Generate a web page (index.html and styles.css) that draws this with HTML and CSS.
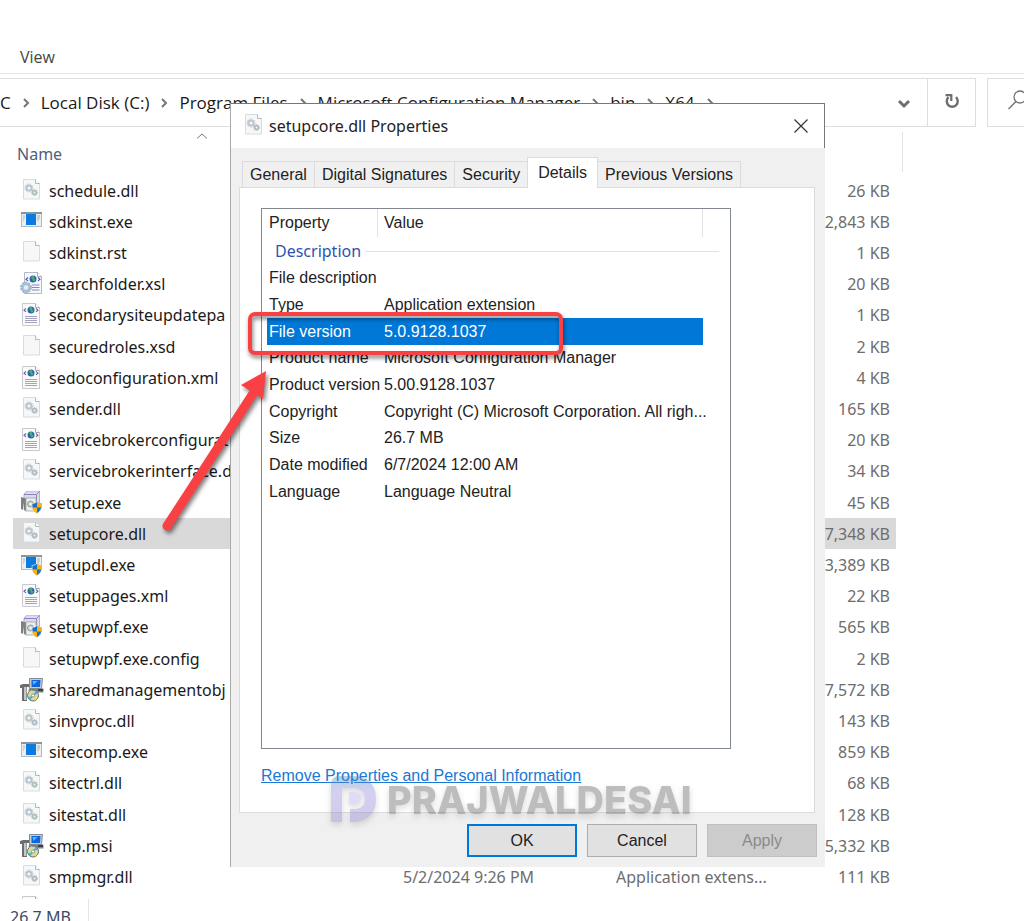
FILE: index.html
```html
<!DOCTYPE html>
<html lang="en">

<head>
    <meta charset="UTF-8">
    <meta name="viewport" content="width=device-width, initial-scale=1.0">
    <title>X64</title>
    <link rel="stylesheet" href="styles.css">
</head>

<body>
    <!-- file type icons -->
    <svg class="icon-defs" width="0" height="0" aria-hidden="true">
        <defs>
            <linearGradient id="pd-fill" x1="0" y1="0" x2="0" y2="1">
                <stop offset="0" stop-color="#3f86bc" />
                <stop offset="0.35" stop-color="#8d86e0" />
                <stop offset="1" stop-color="#8a74c8" />
            </linearGradient>
            <symbol id="page" viewBox="0 0 24 24">
                <path d="M3.500 .5h12l4 4v15.500h-16z" fill="#f6f7f7" stroke="#d9dcde" />
                <path d="M15.500 .5v4h4" fill="#fff" stroke="#b4b8ba" />
            </symbol>
            <symbol id="dll" viewBox="0 0 24 24">
                <use href="#page" />
                <circle cx="9" cy="9" r="2.600" fill="none" stroke="#bcc5cc" stroke-width="2" />
                <circle cx="9" cy="9" r="4" fill="none" stroke="#bcc5cc" stroke-width="1" stroke-dasharray="1.5 1.200" />
                <circle cx="14.500" cy="13.500" r="1.800" fill="none" stroke="#b2bcc4" stroke-width="1.800" />
                <circle cx="14.500" cy="13.500" r="3" fill="none" stroke="#b2bcc4" stroke-width="1" stroke-dasharray="1.200 1" />
            </symbol>
            <symbol id="exe" viewBox="0 0 24 24">
                <rect x="1.500" y="2.500" width="20" height="14" fill="#eceff1" stroke="#b5babd" />
                <path d="M1 3h21" stroke="#8d9499" stroke-width="2" />
                <rect x="6" y="4" width="10" height="11" fill="#0c7be0" />
                <path d="M3 6h2M3 8h2M3 10h1M17 6h3M17 8h3M17 10h2" stroke="#a9afb3" />
            </symbol>
            <symbol id="xml" viewBox="0 0 24 24">
                <path d="M2.500 .5h13l4 4v18h-17z" fill="#fafafa" stroke="#c9c9cf" />
                <path d="M15.500 .5v4h4" fill="#fff" stroke="#a9a9b2" />
                <circle cx="11" cy="7" r="3.500" fill="#2668b0" />
                <path d="M9 5.500q2-2.500 3.500-.5l-.5 1.500 1.500 1-1 2q-2 0-2-2z" fill="#4fae62" />
                <path d="M6 5.500l-2 1.700 2 1.700M16 5.500l2 1.700-2 1.700" fill="none" stroke="#685fae" stroke-width="1.100" />
                <path d="M5 13.500h12M5 15.500h12M5 17.500h12M5 19.500h12" stroke="#a3a3bd" />
            </symbol>
            <symbol id="xsl" viewBox="0 0 24 24">
                <path d="M4.500 .5h13l4 4v17h-17z" fill="#f7f8fc" stroke="#b4b8cc" />
                <path d="M17.500 .5v4h4" fill="#fff" stroke="#a9a9b2" />
                <circle cx="13" cy="7" r="3.500" fill="#2668b0" />
                <path d="M11 5.500q2-2.500 3.500-.5l-.5 1.500 1.500 1-1 2q-2 0-2-2z" fill="#4fae62" />
                <path d="M8 5.500l-2 1.700 2 1.700M18 5.500l2 1.700-2 1.700" fill="none" stroke="#4450a8" stroke-width="1.100" />
                <path d="M12 13h7.500M12 15.500h7.500M12 18h7.500" stroke="#7d8ad0" stroke-width="1.200" />
                <circle cx="6" cy="15.500" r="3.800" fill="#e6eef6" stroke="#a9bfd5" stroke-width="3" />
                <circle cx="6" cy="15.500" r="5.500" fill="none" stroke="#87a4c2" stroke-dasharray="2 1.500" />
            </symbol>
            <symbol id="shield" viewBox="0 0 24 24">
                <path d="M12 12.500q3 0 5-2 2.500 2 5 2 .5 7-5 10-5.500-3-5-10z" fill="#1d6fc4" stroke="#fff" stroke-width=".6" />
                <path d="M17 10.500q2.500 2 5 2v4h-5zM12.200 16.500h4.800v6q-4-2-4.800-6z" fill="#fbb215" />
            </symbol>
            <symbol id="setup" viewBox="0 0 24 24">
                <path d="M4 3l3-3h12.500v13H4z" fill="#dcdaf0" stroke="#a6a2cc" stroke-width=".8" />
                <path d="M4 3.500h12.500l3-3M16.500 3.500v9" fill="none" stroke="#8a85bb" />
                <path d="M1 6l5 1.500v12.500l-2-1v-8l-1 8-2-1z" fill="#7c8080" />
                <rect x="6" y="7" width="10" height="13" fill="#edf0ee" stroke="#9da5a2" stroke-width=".8" />
                <circle cx="10.500" cy="13" r="3" fill="#c9d3cc" stroke="#8e9a94" />
                <circle cx="10.500" cy="13" r="1" fill="#fff" />
                <use href="#shield" />
            </symbol>
            <symbol id="exe-admin" viewBox="0 0 24 24">
                <use href="#exe" />
                <use href="#shield" />
            </symbol>
            <symbol id="msi" viewBox="0 0 24 24">
                <path d="M0 7l3-1h6v3H7v14H2V10H0z" fill="#6b6f70" />
                <path d="M4 9h2.500v13H4z" fill="#c3c7c7" />
                <path d="M9.500 .5h13l-1 10h-12z" fill="#c5ccd2" stroke="#6b7580" stroke-width=".8" />
                <path d="M11.500 2h9l-.5 7h-8.500z" fill="#0f63dd" />
                <path d="M12.500 3h5l-4 4z" fill="#4fc0f5" />
                <path d="M9 10.500h14.500v4h-6l-9-1z" fill="#7d8488" />
                <path d="M18 12h5" stroke="#24282b" stroke-width="1.500" />
                <circle cx="13" cy="17.500" r="5.500" fill="#c8dcd0" stroke="#66706c" />
                <path d="M13 17.500l-4-3.500 3-2zM13 17.500l4.500 3-3 2z" fill="#f2dc4b" />
                <path d="M13 17.500l2.500-5 2.500 3zM13 17.500l-2.500 5-2.500-3z" fill="#55b9a5" />
                <circle cx="13" cy="17.500" r="1.500" fill="#fff" stroke="#777" stroke-width=".7" />
            </symbol>
            <symbol id="crumb" viewBox="0 0 8 12">
                <path d="M2 2l4 4-4 4" fill="none" stroke="#767676" stroke-width="2" />
            </symbol>
        </defs>
    </svg>

    <div class="explorer">
        <div class="ribbon">
            <button class="ribbon-tab" type="button">View</button>
        </div>

        <div class="toolbar">
            <nav class="address">
                <a href="#">C</a>
                <svg class="sep"><use href="#crumb" /></svg>
                <a href="#">Local Disk (C:)</a>
                <svg class="sep"><use href="#crumb" /></svg>
                <a href="#">Program Files</a>
                <svg class="sep"><use href="#crumb" /></svg>
                <a href="#">Microsoft Configuration Manager</a>
                <svg class="sep"><use href="#crumb" /></svg>
                <a href="#">bin</a>
                <svg class="sep"><use href="#crumb" /></svg>
                <a href="#">X64</a>
                <svg class="sep"><use href="#crumb" /></svg>
                <button class="history" type="button" aria-label="Previous locations">
                    <svg width="14" height="10" viewBox="0 0 14 10"><path d="M2 2l5 5 5-5" fill="none" stroke="#6e6e6e" stroke-width="3" /></svg>
                </button>
            </nav>
            <button class="refresh" type="button" aria-label="Refresh">
                <svg width="16" height="16" viewBox="0 0 16 16"><path d="M12 4.200a5.500 5.500 0 1 1-7.500 0" fill="none" stroke="#6e6e6e" stroke-width="2.400" /><path d="M1.500 2.200h5.800v5.800" fill="none" stroke="#6e6e6e" stroke-width="2.200" /></svg>
            </button>
            <button class="search" type="button" aria-label="Search">
                <svg width="22" height="22" viewBox="0 0 22 22"><circle cx="13" cy="8" r="6" fill="none" stroke="#757575" stroke-width="1.300" /><path d="M9 12.500L1.500 20" stroke="#757575" stroke-width="1.500" /></svg>
            </button>
        </div>

        <div class="columns">
            <span class="column-name">Name</span>
            <svg class="sort" width="12" height="6" viewBox="0 0 12 6"><path d="M1 5.500l5-4.500 5 4.500" fill="none" stroke="#777" /></svg>
            <span class="column-end"></span>
        </div>

        <div class="files">
            <table class="file-table">
                <tbody>
                    <tr><td class="name"><svg><use href="#dll" /></svg>schedule.dll</td><td class="date"></td><td class="type"></td><td class="size">26 KB</td></tr>
                    <tr><td class="name"><svg><use href="#exe" /></svg>sdkinst.exe</td><td></td><td></td><td class="size">2,843 KB</td></tr>
                    <tr><td class="name"><svg><use href="#page" /></svg>sdkinst.rst</td><td></td><td></td><td class="size">1 KB</td></tr>
                    <tr><td class="name"><svg><use href="#xsl" /></svg>searchfolder.xsl</td><td></td><td></td><td class="size">20 KB</td></tr>
                    <tr><td class="name"><svg><use href="#xml" /></svg>secondarysiteupdatepa</td><td></td><td></td><td class="size">1 KB</td></tr>
                    <tr><td class="name"><svg><use href="#page" /></svg>securedroles.xsd</td><td></td><td></td><td class="size">2 KB</td></tr>
                    <tr><td class="name"><svg><use href="#xml" /></svg>sedoconfiguration.xml</td><td></td><td></td><td class="size">4 KB</td></tr>
                    <tr><td class="name"><svg><use href="#dll" /></svg>sender.dll</td><td></td><td></td><td class="size">165 KB</td></tr>
                    <tr><td class="name"><svg><use href="#xml" /></svg>servicebrokerconfigurat</td><td></td><td></td><td class="size">20 KB</td></tr>
                    <tr><td class="name"><svg><use href="#dll" /></svg>servicebrokerinterface.d</td><td></td><td></td><td class="size">34 KB</td></tr>
                    <tr><td class="name"><svg><use href="#setup" /></svg>setup.exe</td><td></td><td></td><td class="size">45 KB</td></tr>
                    <tr class="selected"><td class="name"><svg><use href="#dll" /></svg>setupcore.dll</td><td></td><td></td><td class="size">7,348 KB</td></tr>
                    <tr><td class="name"><svg><use href="#exe-admin" /></svg>setupdl.exe</td><td></td><td></td><td class="size">3,389 KB</td></tr>
                    <tr><td class="name"><svg><use href="#xml" /></svg>setuppages.xml</td><td></td><td></td><td class="size">22 KB</td></tr>
                    <tr><td class="name"><svg><use href="#setup" /></svg>setupwpf.exe</td><td></td><td></td><td class="size">565 KB</td></tr>
                    <tr><td class="name"><svg><use href="#page" /></svg>setupwpf.exe.config</td><td></td><td></td><td class="size">2 KB</td></tr>
                    <tr><td class="name"><svg><use href="#msi" /></svg>sharedmanagementobj</td><td></td><td></td><td class="size">7,572 KB</td></tr>
                    <tr><td class="name"><svg><use href="#dll" /></svg>sinvproc.dll</td><td></td><td></td><td class="size">143 KB</td></tr>
                    <tr><td class="name"><svg><use href="#exe" /></svg>sitecomp.exe</td><td></td><td></td><td class="size">859 KB</td></tr>
                    <tr><td class="name"><svg><use href="#dll" /></svg>sitectrl.dll</td><td></td><td></td><td class="size">68 KB</td></tr>
                    <tr><td class="name"><svg><use href="#dll" /></svg>sitestat.dll</td><td></td><td></td><td class="size">128 KB</td></tr>
                    <tr><td class="name"><svg><use href="#msi" /></svg>smp.msi</td><td></td><td></td><td class="size">5,332 KB</td></tr>
                    <tr><td class="name"><svg><use href="#dll" /></svg>smpmgr.dll</td><td>5/2/2024 9:26 PM</td><td>Application extens...</td><td class="size">111 KB</td></tr>
                    <tr><td class="name"><svg><use href="#xml" /></svg></td><td></td><td></td><td class="size"></td></tr>
                </tbody>
            </table>
        </div>

        <div class="status">
            <span class="status-size">26.7 MB</span>
        </div>
    </div>

    <div class="dialog" role="dialog" aria-labelledby="dialog-title">
        <div class="title-bar">
            <svg class="title-icon"><use href="#dll" /></svg>
            <span id="dialog-title">setupcore.dll Properties</span>
            <button class="close" type="button" aria-label="Close">
                <svg width="14" height="14" viewBox="0 0 14 14"><path d="M.5 .5l13 13M13.500 .5l-13 13" stroke="#333" stroke-width="1.200" /></svg>
            </button>
        </div>

        <div class="tabs" role="tablist">
            <button class="tab" type="button" role="tab">General</button>
            <button class="tab" type="button" role="tab">Digital Signatures</button>
            <button class="tab" type="button" role="tab">Security</button>
            <button class="tab active" type="button" role="tab" aria-selected="true">Details</button>
            <button class="tab" type="button" role="tab">Previous Versions</button>
        </div>

        <div class="tab-page">
            <div class="list-box">
                <table class="props">
                    <colgroup>
                        <col class="col-property">
                        <col>
                        <col class="col-tail">
                    </colgroup>
                    <thead>
                        <tr>
                            <th>Property</th>
                            <th>Value</th>
                            <td></td>
                        </tr>
                        <tr>
                            <th class="group" colspan="3"><div>Description</div></th>
                        </tr>
                    </thead>
                    <tbody>
                        <tr><td>File description</td><td></td><td></td></tr>
                        <tr><td>Type</td><td>Application extension</td><td></td></tr>
                        <tr class="picked"><td>File version</td><td>5.0.9128.1037</td><td></td></tr>
                        <tr><td>Product name</td><td>Microsoft Configuration Manager</td><td></td></tr>
                        <tr><td>Product version</td><td>5.00.9128.1037</td><td></td></tr>
                        <tr><td>Copyright</td><td>Copyright (C) Microsoft Corporation. All righ...</td><td></td></tr>
                        <tr><td>Size</td><td>26.7 MB</td><td></td></tr>
                        <tr><td>Date modified</td><td>6/7/2024 12:00 AM</td><td></td></tr>
                        <tr><td>Language</td><td>Language Neutral</td><td></td></tr>
                    </tbody>
                </table>
            </div>
            <a class="remove-link" href="#">Remove Properties and Personal Information</a>
        </div>

        <div class="buttons">
            <button class="button default" type="button">OK</button>
            <button class="button" type="button">Cancel</button>
            <button class="button" type="button" disabled>Apply</button>
        </div>
    </div>

    <div class="watermark">
        <svg width="48" height="48" viewBox="0 0 48 48">
            <path d="M1 46V9q0-9 9-9h14q22 2 22 23T24 46h-4V33h6q9-1 9-10t-9-11H12v34z" fill="url(#pd-fill)" />
            <path d="M19 16h6q6 1 6 6t-6 6h-6z" fill="#a9a4e8" />
        </svg>
        <span>PRAJWALDESAI</span>
    </div>

    <!-- callout: arrow from the selected file to its version -->
    <svg class="arrow" width="120" height="230" viewBox="0 0 120 230" aria-hidden="true">
        <path class="arrow-line" d="M7 216L94 82" />
        <path class="arrow-head" d="M106 61L81 75L103 89Z" />
    </svg>
    <div class="frame"></div>
</body>

</html>
```
FILE: styles.css
```css
* {
    box-sizing: border-box;
}

body {
    margin: 0;
    height: 100vh;
    overflow: hidden;
    position: relative;
    background-color: #fff;
    color: #1a1a1a;
    font-family: "Noto Sans", sans-serif;
    font-size: 16px;
}

button {
    font: inherit;
    color: inherit;
    border: 0;
    padding: 0;
    background: none;
}

.icon-defs {
    position: absolute;
}

/* explorer window */
.explorer {
    display: flex;
    flex-direction: column;
    height: 100%;
}

.ribbon {
    flex: none;
    height: 74px;
    padding: 45px 20px 0;
    border-bottom: 1px solid #e4e4e4;
    font-family: "Open Sans", sans-serif;
    line-height: 24px;
    color: #444;
}

.toolbar {
    flex: none;
    display: flex;
    height: 49px;
    margin-top: 4px;
}

.address {
    flex: 1;
    display: flex;
    align-items: center;
    gap: 11px;
    border: 1px solid #dedede;
    border-left: 0;
    padding-right: 16px;
    font-family: "Open Sans", sans-serif;
    font-size: 17px;
    white-space: nowrap;
}

.address a {
    color: #1a1a1a;
    text-decoration: none;
}

.sep {
    flex: none;
    width: 8px;
    height: 12px;
}

.history {
    margin-left: auto;
}

.refresh {
    width: 48px;
    margin-right: 11px;
    border: 1px solid #dedede;
    border-left: 0;
}

.search {
    width: 37px;
    padding-left: 19px;
    border: 1px solid #dedede;
    border-right: 0;
    text-align: left;
    overflow: hidden;
}

.columns {
    flex: none;
    position: relative;
    height: 48px;
    padding: 15px 17px 0;
    line-height: 24px;
    color: #4c6080;
}

.sort {
    position: absolute;
    left: 196px;
    top: 6px;
}

.column-end {
    position: absolute;
    left: 902px;
    top: 5px;
    height: 40px;
    border-left: 1px solid #e5e5e5;
}

.files {
    flex: 1;
    min-height: 0;
    overflow: hidden;
    padding-left: 13px;
}

.file-table {
    width: 883px;
    height: 749px;
    table-layout: fixed;
    border-collapse: collapse;
    color: #6d6d6d;
    white-space: nowrap;
}

.file-table td {
    padding: 0;
    line-height: 24px;
}

.file-table .name {
    width: 390px;
    padding-left: 7px;
    color: #1a1a1a;
}

.file-table .date {
    width: 213px;
}

.file-table .type {
    width: 170px;
}

.file-table .size {
    padding-right: 6px;
    text-align: right;
}

.file-table svg {
    width: 24px;
    height: 24px;
    margin-right: 5px;
    vertical-align: top;
}

.selected {
    background-color: #d9d9d9;
}

.status {
    flex: none;
    height: 22px;
    overflow: hidden;
    padding-left: 10px;
    line-height: 36px;
    color: #3a4a66;
}

.status-size {
    display: inline-block;
    width: 79px;
    border-right: 1px solid #e5e5e5;
}

/* properties dialog */
.dialog {
    position: absolute;
    left: 230px;
    top: 103px;
    width: 595px;
    padding-bottom: 10px;
    background-color: #f0f0f0;
    border-left: 1px solid #a9a9a9;
    font-family: "Liberation Sans", sans-serif;
    color: #222;
}

.title-bar {
    display: flex;
    align-items: center;
    height: 45px;
    padding: 0 16px 0 11px;
    background-color: #fff;
    border-top: 1px solid #777;
    border-right: 1px solid #777;
    font-family: "Noto Sans", sans-serif;
}

.title-icon {
    width: 24px;
    height: 24px;
    margin-right: 3px;
}

.close {
    margin-left: auto;
    line-height: 0;
}

.tabs {
    display: flex;
    align-items: flex-end;
    height: 39px;
    padding-left: 11px;
}

.tab {
    height: 26px;
    padding: 1px 7px 0;
    border: 1px solid #dcdcdc;
    border-bottom: 0;
    margin-right: -1px;
    white-space: nowrap;
}

.tab.active {
    position: relative;
    height: 31px;
    margin-bottom: -1px;
    padding: 0 10px;
    background-color: #fff;
}

.tab-page {
    height: 626px;
    margin: 0 10px 0 8px;
    padding: 20px 21px 0;
    background-color: #fff;
    border: 1px solid #dcdcdc;
}

.list-box {
    width: 470px;
    height: 541px;
    padding-left: 5px;
    border: 1px solid #828790;
}

.props {
    width: 452px;
    height: 296px;
    table-layout: fixed;
    border-collapse: separate;
    border-spacing: 0;
    line-height: 20px;
    white-space: nowrap;
}

.col-property {
    width: 111px;
}

.col-tail {
    width: 16px;
}

.props th {
    height: 28px;
    padding: 0 6px 0 2px;
    border-right: 1px solid #e2e2e2;
    font-weight: normal;
    text-align: left;
}

.props td {
    padding: 0 0 0 2px;
}

.props th + th,
.props td + td {
    padding-left: 6px;
}

.props .group {
    padding: 0 0 0 8px;
    border: 0;
    font-family: "Noto Sans", sans-serif;
    color: #2f52b0;
}

.group div {
    display: flex;
    align-items: center;
    gap: 5px;
}

.group div::after {
    content: "";
    flex: 1;
    border-top: 1px solid #d8e2f2;
}

.picked td:not(:last-child) {
    background-color: #0078d7;
    color: #fff;
}

.remove-link {
    display: inline-block;
    margin-top: 17px;
    line-height: 20px;
    color: #1a78d6;
}

.buttons {
    display: flex;
    justify-content: flex-end;
    gap: 10px;
    padding: 11px 8px 0;
}

.button {
    width: 110px;
    height: 33px;
    background-color: #e1e1e1;
    border: 1px solid #adadad;
}

.button.default {
    border: 2px solid #0078d7;
}

.button:disabled {
    background-color: #ccc;
    border-color: #bfbfbf;
    color: #8a8a8a;
}

/* watermark and callouts drawn over the windows */
.watermark {
    position: absolute;
    left: 330px;
    top: 776px;
    display: flex;
    align-items: center;
    gap: 9px;
    font-family: Inter, sans-serif;
    font-size: 38px;
    font-weight: 800;
    line-height: 48px;
    color: #555;
    opacity: 0.38;
    filter: drop-shadow(0 3px 3px #999);
    pointer-events: none;
}

.frame {
    position: absolute;
    left: 248px;
    top: 312px;
    width: 315px;
    height: 43px;
    border: 4px solid #f94144;
    border-radius: 7px;
    filter: drop-shadow(1px 3px 2px rgba(0, 0, 0, 0.5));
    pointer-events: none;
}

.arrow {
    position: absolute;
    left: 160px;
    top: 310px;
    filter: drop-shadow(2px 3px 2px rgba(0, 0, 0, 0.5));
    pointer-events: none;
}

.arrow-line {
    fill: none;
    stroke: #f94144;
    stroke-width: 9;
    stroke-linecap: round;
}

.arrow-head {
    fill: #f94144;
}
```
